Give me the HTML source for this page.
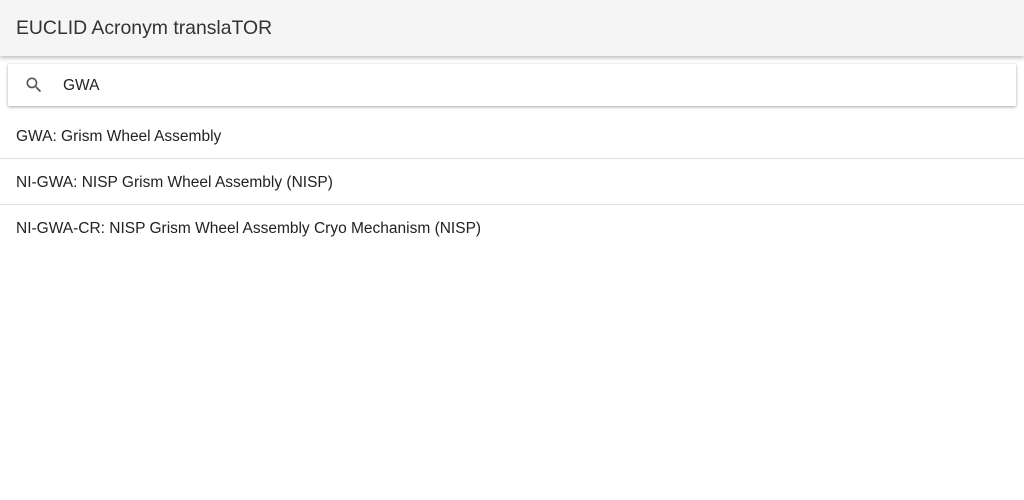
<!DOCTYPE html>
<html><head><meta charset="utf-8"><style>
html,body{margin:0;padding:0;width:1024px;height:500px;background:#fff;font-family:"Liberation Sans",sans-serif;overflow:hidden}
.bar{position:absolute;left:0;top:0;width:1024px;height:56px;background:#f5f5f5;box-shadow:0 2px 4px rgba(0,0,0,.25)}
.bar span{position:absolute;left:16px;top:17px;font-size:19.4px;color:#333}
.search{position:absolute;left:8px;top:64px;width:1008px;height:42px;background:#fff;box-shadow:0 1px 3px rgba(0,0,0,.35)}
.search svg{position:absolute;left:16px;top:11px}
.search span{position:absolute;left:55px;top:13px;font-size:15.5px;color:#222}
.item{position:absolute;left:0;width:1024px;height:46px;border-bottom:1px solid #ddd;font-size:15.5px;color:#222}
.item span{position:absolute;left:16px;top:16px}
</style></head><body>
<div class="bar"><span>EUCLID Acronym translaTOR</span></div>
<div class="search"><svg width="20" height="20" viewBox="0 0 24 24"><path fill="#555" d="M15.5 14h-.79l-.28-.27A6.47 6.47 0 0 0 16 9.5 6.5 6.5 0 1 0 9.5 16c1.61 0 3.090-.59 4.23-1.57l.27.28v.79l5 4.99L20.49 19l-4.99-5zm-6 0C7.010 14 5 11.99 5 9.5S7.01 5 9.5 5 14 7.01 14 9.5 11.99 14 9.5 14z"/></svg><span>GWA</span></div>
<div class="item" style="top:112px"><span>GWA: Grism Wheel Assembly</span></div>
<div class="item" style="top:158px"><span>NI-GWA: NISP Grism Wheel Assembly (NISP)</span></div>
<div class="item" style="top:204px;border:none"><span>NI-GWA-CR: NISP Grism Wheel Assembly Cryo Mechanism (NISP)</span></div>
</body></html>
